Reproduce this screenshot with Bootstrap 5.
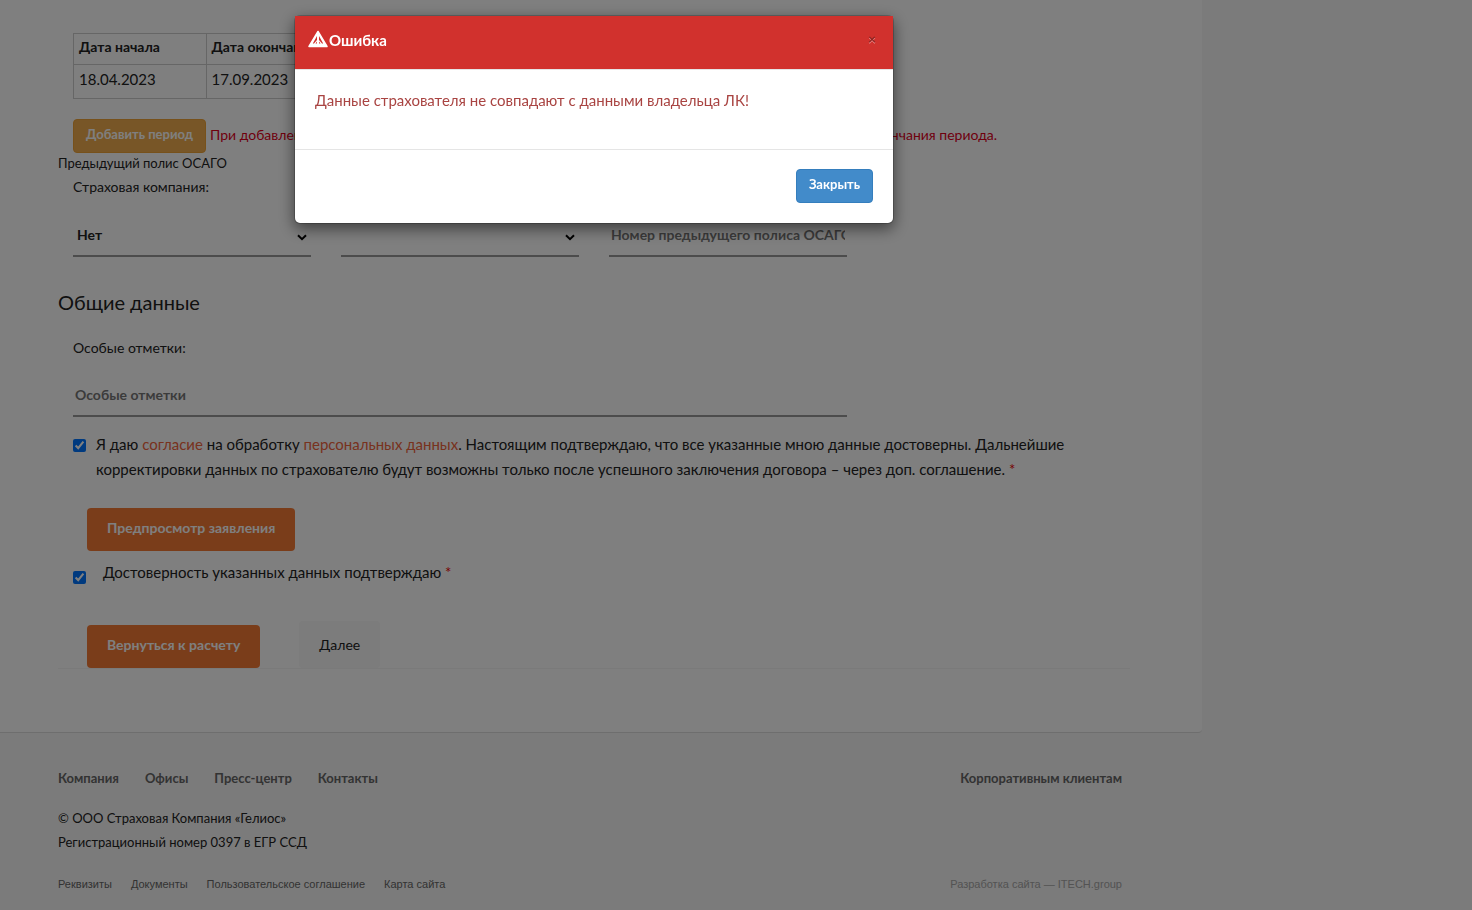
<!DOCTYPE html>
<html lang="ru">
<head>
<meta charset="utf-8">
<meta name="viewport" content="width=device-width, initial-scale=1">
<title>Гелиос — оформление полиса</title>
<link rel="stylesheet" href="https://cdn.jsdelivr.net/npm/bootstrap@5.3.0/dist/css/bootstrap.min.css">
<style>
  body { font-family: Lato, "Noto Sans", sans-serif; font-size: 15px; line-height: 24px; color: #222; background: #f6f6f6; }
  a { text-decoration: none; }
  .site-main { max-width: 1202px; background: #fff; padding: 33px 72px 63px 58px; border-bottom: 1px solid #dcdcdc; border-bottom-right-radius: 4px; }
  .inset { padding-left: 15px; padding-right: 15px; }
  .text-13 { font-size: 13px; }
  .text-14 { font-size: 14px; }

  .periods { width: 266px; table-layout: fixed; white-space: nowrap; margin-bottom: 20px; border-color: #ccc; --bs-table-color: #222; }
  .periods > :not(caption) > * > * { padding: 1px 5px 5px; height: 31px; line-height: 24px; }
  .periods tbody > tr > td { height: 34px; padding-top: 2px; padding-bottom: 7px; }
  .periods th { font-size: 14px; }

  .btn { font-size: 13px; font-weight: 700; line-height: 20px; border-radius: 4px; padding: 4px 12px 8px; }
  .btn-period { color: #fff; background: #f0ad4e; border-color: #eea236; }
  .btn-brand { color: #fff; background: #f47a35; border: 0; font-size: 14px; padding: 10px 20px 13px; }
  .btn-next { color: #222; background: #f8f8f8; border: 0; font-size: 14px; font-weight: 400; padding: 14px 20px 13px; }
  .btn-close-dialog { color: #fff; background: #428bca; border-color: #357ebd; }
  .warn-note { color: #e0001b; white-space: nowrap; padding-bottom: 2px; }

  .group-title { line-height: 20px; }
  .company-label { line-height: 28px; }
  .field-row { padding-top: 13px; }
  .line-field.form-select, .line-field.form-control { height: 43px; border: 0; border-bottom: 2px solid #999; border-radius: 0; padding: 0 2px; font-size: 14px; font-weight: 700; color: #222; background-color: transparent; }
  .line-field.form-select { padding-left: 4px; background-image: url("data:image/svg+xml,%3Csvg xmlns='http://www.w3.org/2000/svg' viewBox='0 0 10 7'%3E%3Cpath d='M1 1.2 5 5.2 9 1.2' fill='none' stroke='%23000' stroke-width='2'/%3E%3C/svg%3E"); background-size: 10px 7px; background-position: right 4px top 20px; }
  .line-field::placeholder { color: #777; opacity: 1; }
  .section-title { font-size: 20px; line-height: 24px; font-weight: 400; margin: 33px 0 22px; }
  .notes-label { padding-bottom: 14px; }

  .agree-row { padding-top: 15px; }
  .agree { display: flex; line-height: 25px; }
  .agree input { width: 13px; height: 13px; flex: none; margin: 7px 10px 0 0; accent-color: #0075ff; }
  .agree a { color: #f0643c; }
  .confirm input { margin: 11px 17px 0 0; }
  .req { color: #e00; }
  .preview-row { padding: 26px 0 9px 29px; }
  .form-end { border-bottom: 1px solid #f4f4f4; padding: 36px 0 0 29px; gap: 39px; }

  .site-footer { max-width: 1202px; padding: 33px 80px 12px 58px; }
  .site-footer a { color: #666; }
  .foot-nav { font-size: 13px; font-weight: 700; gap: 26px; }
  .foot-legal { font-family: "Liberation Sans", Arial, sans-serif; font-size: 11px; gap: 19px; }
  .foot-note { margin: 16px 0 18px; }
  .site-footer .foot-credit { color: #a6a6a6; }

  .backdrop { position: fixed; inset: 0; background: rgba(0, 0, 0, .5); z-index: 1050; }
  .modal { max-width: 1188px; pointer-events: none; }
  .modal-dialog { max-width: 600px; margin: 15px auto; }
  .modal-content { border: 1px solid rgba(0, 0, 0, .2); border-radius: 6px; background-clip: padding-box; box-shadow: 0 5px 15px rgba(0, 0, 0, .5); }
  .modal-header { background: #d1312d; color: #fff; padding: 12px 15px 17px 13px; border-bottom: 1px solid #e5e5e5; border-radius: 0; }
  .modal-title { font-size: 15px; line-height: 24px; font-weight: 700; gap: 1px; }
  .modal-title svg { margin-top: 2px; }
  .dialog-x { border: 0; background: none; padding: 0 2px; color: #8f2522; font-size: 14px; font-weight: 700; line-height: 22px; text-shadow: 0 1px 0 #e88; }
  .modal-body { color: #a94442; padding: 18px 20px 37px; }
  .modal-footer { padding: 19px 20px 20px; border-top: 1px solid #e5e5e5; }
  .modal-footer > * { margin: 0; }
</style>
</head>
<body>
<main class="site-main">
  <form>
    <div class="inset">
      <table class="table table-bordered periods">
        <thead><tr><th>Дата начала</th><th>Дата окончания</th></tr></thead>
        <tbody><tr><td>18.04.2023</td><td>17.09.2023</td></tr></tbody>
      </table>
      <div class="d-flex align-items-center">
        <button type="button" class="btn btn-period me-1">Добавить период</button>
        <span class="warn-note text-14">При добавлении периода необходимо указать дату начала и дату окончания, но начало будет позже окончания периода.</span>
      </div>
    </div>
    <div class="text-13 group-title">Предыдущий полис ОСАГО</div>
    <div class="inset">
      <label for="company" class="text-14 d-block company-label">Страховая компания:</label>
    </div>
    <div class="row mx-0 field-row">
      <div class="col-3 inset"><select id="company" class="form-select line-field"><option>Нет</option></select></div>
      <div class="col-3 inset"><select class="form-select line-field" aria-label="Серия предыдущего полиса"><option></option></select></div>
      <div class="col-3 inset"><input type="text" class="form-control line-field" placeholder="Номер предыдущего полиса ОСАГО" aria-label="Номер предыдущего полиса ОСАГО"></div>
    </div>

    <h2 class="section-title">Общие данные</h2>
    <div class="row mx-0">
      <div class="col-9 inset">
        <label for="notes" class="text-14 d-block notes-label">Особые отметки:</label>
        <input id="notes" type="text" class="form-control line-field" placeholder="Особые отметки">
      </div>
    </div>

    <div class="inset agree-row">
      <div class="agree">
        <input type="checkbox" id="consent" checked>
        <label for="consent">Я даю <a href="#">согласие</a> на обработку <a href="#">персональных данных</a>. Настоящим подтверждаю, что все указанные мною данные достоверны. Дальнейшие<br>корректировки данных по страхователю будут возможны только после успешного заключения договора – через доп. соглашение. <span class="req">*</span></label>
      </div>
    </div>
    <div class="preview-row">
      <button type="button" class="btn btn-brand">Предпросмотр заявления</button>
    </div>
    <div class="inset">
      <div class="agree confirm">
        <input type="checkbox" id="truth" checked>
        <label for="truth">Достоверность указанных данных подтверждаю <span class="req">*</span></label>
      </div>
    </div>
    <div class="form-end d-flex align-items-end">
      <button type="button" class="btn btn-brand">Вернуться к расчету</button>
      <button type="button" class="btn btn-next">Далее</button>
    </div>
  </form>
</main>

<footer class="site-footer">
  <div class="d-flex justify-content-between foot-nav">
    <nav class="d-flex foot-nav" aria-label="Нижнее меню">
      <a href="#">Компания</a><a href="#">Офисы</a><a href="#">Пресс-центр</a><a href="#">Контакты</a>
    </nav>
    <a href="#">Корпоративным клиентам</a>
  </div>
  <p class="text-13 foot-note">© ООО Страховая Компания «Гелиос»<br>Регистрационный номер 0397 в ЕГР ССД</p>
  <div class="d-flex justify-content-between foot-legal">
    <div class="d-flex foot-legal">
      <a href="#">Реквизиты</a><a href="#">Документы</a><a href="#">Пользовательское соглашение</a><a href="#">Карта сайта</a>
    </div>
    <a href="#" class="foot-credit">Разработка сайта — ITECH.group</a>
  </div>
</footer>

<div class="backdrop"></div>
<div class="modal d-block" role="dialog" aria-modal="true" aria-labelledby="error-title">
  <div class="modal-dialog">
    <div class="modal-content">
      <div class="modal-header align-items-start">
        <h1 class="modal-title d-flex" id="error-title">
          <svg width="20" height="18" viewBox="0 0 20 18" aria-hidden="true"><path d="M10 1.500 19 16.500H1Z" fill="#fff" stroke="#fff" stroke-width="1.500" stroke-linejoin="round"/><path d="M9 6v4L6 13.500H4.800ZM11 6v4l3 3.500h1.200ZM7.500 13.500 9 11.500v2ZM12.500 13.500 11 11.500v2Z" fill="#d1312d"/></svg>
          <span>Ошибка</span>
        </h1>
        <button type="button" class="dialog-x" aria-label="Закрыть окно">×</button>
      </div>
      <div class="modal-body">Данные страхователя не совпадают с данными владельца ЛК!</div>
      <div class="modal-footer"><button type="button" class="btn btn-close-dialog">Закрыть</button></div>
    </div>
  </div>
</div>
<script src="https://cdn.jsdelivr.net/npm/bootstrap@5.3.0/dist/js/bootstrap.bundle.min.js"></script>
</body>
</html>
